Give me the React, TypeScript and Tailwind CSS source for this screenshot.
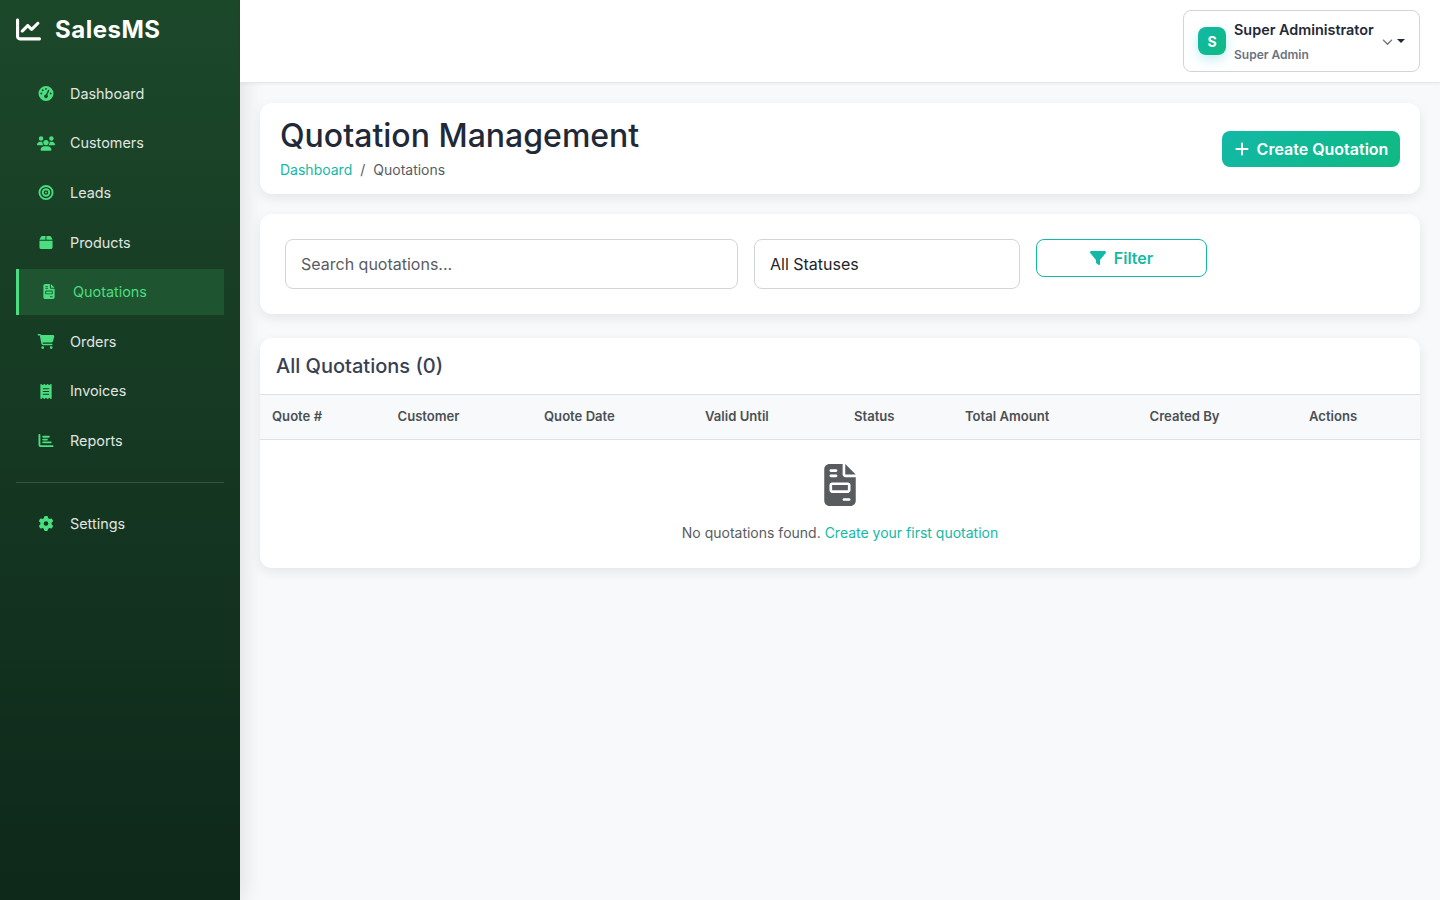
import type { IconType } from 'react-icons';
import {
  FaBox,
  FaBullseye,
  FaCartShopping,
  FaChartBar,
  FaChartLine,
  FaChevronDown,
  FaFileInvoice,
  FaFilter,
  FaGaugeHigh,
  FaGear,
  FaPlus,
  FaReceipt,
  FaUsers,
} from 'react-icons/fa6';
import clsx from 'clsx';

interface NavItem {
  label: string;
  icon: IconType;
  active?: boolean;
}

const mainNav: NavItem[] = [
  { label: 'Dashboard', icon: FaGaugeHigh },
  { label: 'Customers', icon: FaUsers },
  { label: 'Leads', icon: FaBullseye },
  { label: 'Products', icon: FaBox },
  { label: 'Quotations', icon: FaFileInvoice, active: true },
  { label: 'Orders', icon: FaCartShopping },
  { label: 'Invoices', icon: FaReceipt },
  { label: 'Reports', icon: FaChartBar },
];

const columns = [
  { label: 'Quote #', width: 'w-[125.5px]' },
  { label: 'Customer', width: 'w-[146.5px]' },
  { label: 'Quote Date', width: 'w-[161px]' },
  { label: 'Valid Until', width: 'w-[149px]' },
  { label: 'Status', width: 'w-[111px]' },
  { label: 'Total Amount', width: 'w-[184.5px]' },
  { label: 'Created By', width: 'w-[159.5px]' },
  { label: 'Actions', width: 'w-[123px]' },
];

function NavLink({ label, icon: Icon, active }: NavItem) {
  return (
    <a
      href="#"
      className={clsx(
        'my-[2px] flex h-[45.6px] items-center pl-5 text-[14.4px] leading-[21.6px]',
        active
          ? 'border-l-[3px] border-[#4ade80] bg-[#1f5431] text-[#4ade80]'
          : 'text-[#e0e5e1]',
      )}
    >
      <span className="mr-3.5 flex w-5 justify-center text-[#4ade80]">
        <Icon className="h-[15px] w-[18px] shrink-0" aria-hidden />
      </span>
      {label}
    </a>
  );
}

function Sidebar() {
  return (
    <aside className="z-10 w-60 shrink-0 bg-linear-to-b from-[#1c482a] via-[#153822] to-[#0e281a] px-4 shadow-[4px_0_20px_rgba(0,0,0,0.1)]">
      <div className="flex h-[68.8px] items-center pb-[10px] text-2xl font-bold tracking-[0.5px] text-white">
        <FaChartLine className="mr-[14px] h-[25px] w-[25px]" aria-hidden />
        <span className="pt-[2px]">SalesMS</span>
      </div>
      <nav className="flex flex-col">
        {mainNav.map((item) => (
          <NavLink key={item.label} {...item} />
        ))}
        <hr className="my-4 border-white/15" />
        <NavLink label="Settings" icon={FaGear} />
      </nav>
    </aside>
  );
}

function UserMenu() {
  return (
    <button className="flex h-[62px] w-[237px] items-center rounded-lg border border-[#d1d5db] bg-white pl-[14px] text-left">
      <span className="flex h-7 w-7 items-center justify-center rounded-lg bg-linear-135 from-[#14b8a6] to-[#10b981] pt-[2px] text-sm font-bold text-white shadow-[0_4px_12px_rgba(6,182,212,0.25)]">
        S
      </span>
      <span className="ml-2 flex flex-col pt-px">
        <span className="text-[14.4px] leading-[25px] font-semibold text-[#1f2937]">
          Super Administrator
        </span>
        <span className="text-xs leading-[25px] font-semibold text-[#6b7280]">Super Admin</span>
      </span>
      <FaChevronDown className="ml-2 h-[11px] w-[11px] text-[#6b7280]" aria-hidden />
      <span className="ml-[4px] border-x-4 border-t-4 border-x-transparent border-t-[#1f2937]" />
    </button>
  );
}

function PageHeader() {
  return (
    <section className="flex h-[91px] items-center justify-between rounded-xl bg-white px-5 shadow-[0_4px_12px_rgba(0,0,0,0.08)]">
      <div>
        <h1 className="text-[32px] leading-[38px] font-medium text-[#1f2937]">
          Quotation Management
        </h1>
        <div className="mt-[4px] mb-px flex gap-2 text-sm leading-[21px] text-[#595c5f]">
          <a href="#" className="text-[#14b8a6]">Dashboard</a>
          <span>/</span>
          <span>Quotations</span>
        </div>
      </div>
      <button className="flex h-9 w-[178px] items-center justify-center rounded-lg bg-linear-135 from-[#14b8a6] to-[#10b981] font-semibold text-white">
        <FaPlus className="mr-[7px] h-4 w-4" aria-hidden />
        Create Quotation
      </button>
    </section>
  );
}

function Filters() {
  return (
    <section className="mt-5 flex h-[100px] items-start gap-4 rounded-xl bg-white p-[25px] shadow-[0_4px_12px_rgba(0,0,0,0.08)]">
      <input
        className="h-[50px] w-[453px] rounded-lg border border-[#d1d5db] px-[15px] text-base placeholder:text-[#595c5f]"
        placeholder="Search quotations..."
      />
      <button className="h-[50px] w-[266px] rounded-lg border border-[#d1d5db] px-[15px] text-left text-base text-[#212529]">
        All Statuses
      </button>
      <button className="flex h-[38px] w-[171px] items-center justify-center rounded-lg border border-[#14b8a6] font-semibold text-[#14b8a6]">
        <FaFilter className="mr-2 h-4 w-4" aria-hidden />
        Filter
      </button>
    </section>
  );
}

function QuotationTable() {
  return (
    <section className="mt-6 h-[230px] overflow-hidden rounded-xl bg-white shadow-[0_4px_12px_rgba(0,0,0,0.08)]">
      <h5 className="flex h-14 items-center px-4 text-xl font-medium text-[#374151]">
        All Quotations (0)
      </h5>
      <table className="w-full table-fixed border-collapse">
        <thead>
          <tr className="h-[45px] border-y border-[#dee2e6] bg-[#f8f9fb]">
            {columns.map((col) => (
              <th
                key={col.label}
                className={clsx(
                  'px-3 text-left text-[13.1px] font-semibold whitespace-nowrap text-[#4b5055]',
                  col.width,
                )}
              >
                {col.label}
              </th>
            ))}
          </tr>
        </thead>
        <tbody>
          <tr>
            <td colSpan={8} className="pt-[21px] text-center text-sm text-[#595c5f]">
              <FaFileInvoice className="mx-auto mt-[3px] mb-[17px] h-[42px] w-8" aria-hidden />
              No quotations found.{' '}
              <a href="#" className="text-[#14b8a6]">Create your first quotation</a>
            </td>
          </tr>
        </tbody>
      </table>
    </section>
  );
}

export default function App() {
  return (
    <div className="flex h-screen bg-[#f8f9fb] font-['Inter',sans-serif]">
      <Sidebar />
      <div className="min-w-0 flex-1">
        <header className="relative z-20 flex h-[83px] items-center justify-end border-b border-[#e5e7eb] bg-white pr-5 shadow-[0_1px_3px_rgba(0,0,0,0.05)]">
          <UserMenu />
        </header>
        <main className="p-5">
          <PageHeader />
          <Filters />
          <QuotationTable />
        </main>
      </div>
    </div>
  );
}
